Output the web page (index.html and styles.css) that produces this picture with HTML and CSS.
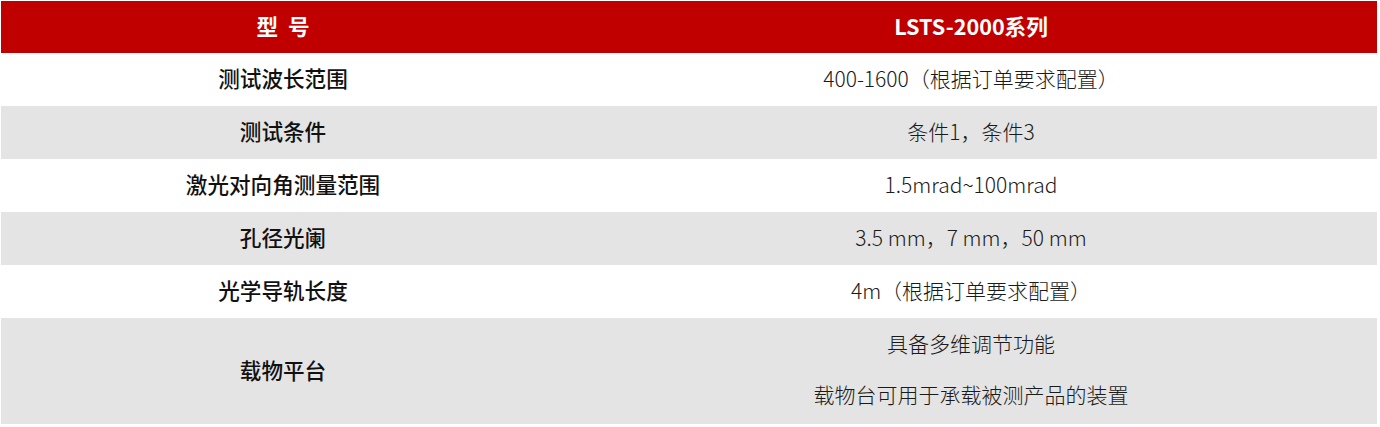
FILE: index.html
```html
<!DOCTYPE html>
<html lang="zh-CN">
<head>
<meta charset="utf-8">
<title>LSTS-2000系列</title>
<link rel="stylesheet" href="styles.css">
</head>
<body>
<table class="spec">
  <colgroup><col class="col-key"><col class="col-val"></colgroup>
  <thead>
    <tr class="head"><th>型&nbsp; 号</th><th>LSTS-2000系列</th></tr>
  </thead>
  <tbody>
    <tr><td class="key">测试波长范围</td><td class="val">400-1600（根据订单要求配置）</td></tr>
    <tr class="alt"><td class="key">测试条件</td><td class="val">条件1，条件3</td></tr>
    <tr><td class="key">激光对向角测量范围</td><td class="val">1.5mrad~100mrad</td></tr>
    <tr class="alt"><td class="key">孔径光阑</td><td class="val">3.5 mm，7 mm，50 mm</td></tr>
    <tr><td class="key">光学导轨长度</td><td class="val">4m（根据订单要求配置）</td></tr>
    <tr class="alt tall"><td class="key">载物平台</td><td class="val"><p class="line">具备多维调节功能</p><p class="line">载物台可用于承载被测产品的装置</p></td></tr>
  </tbody>
</table>
</body>
</html>
```
FILE: styles.css
```css
html, body {
  margin: 0;
  padding: 0;
  background: #fff;
}
body {
  font-family: "Noto Sans CJK SC", "Noto Sans", sans-serif;
  font-size: 21.6px;
}
.spec {
  margin: 1px 0 0 1px;
  width: 1376px;
  border-collapse: collapse;
  table-layout: fixed;
}
.col-key { width: 564px; }
.spec th, .spec td {
  padding: 0 0 4px;
  text-align: center;
  vertical-align: middle;
}
.head th {
  background: #c00000;
  color: #fff;
  font-weight: 700;
  height: 52px;
  box-sizing: border-box;
}
.spec tbody tr { height: 53px; }
.spec tbody tr.alt { background: #e4e4e4; }
.spec tbody tr.tall { height: 106px; }
.key {
  color: #111;
  font-weight: 500;
}
.val {
  color: #1a1a1a;
  font-weight: 300;
  font-size: 21px;
}
.line {
  margin: 0;
  line-height: 51px;
}
```
